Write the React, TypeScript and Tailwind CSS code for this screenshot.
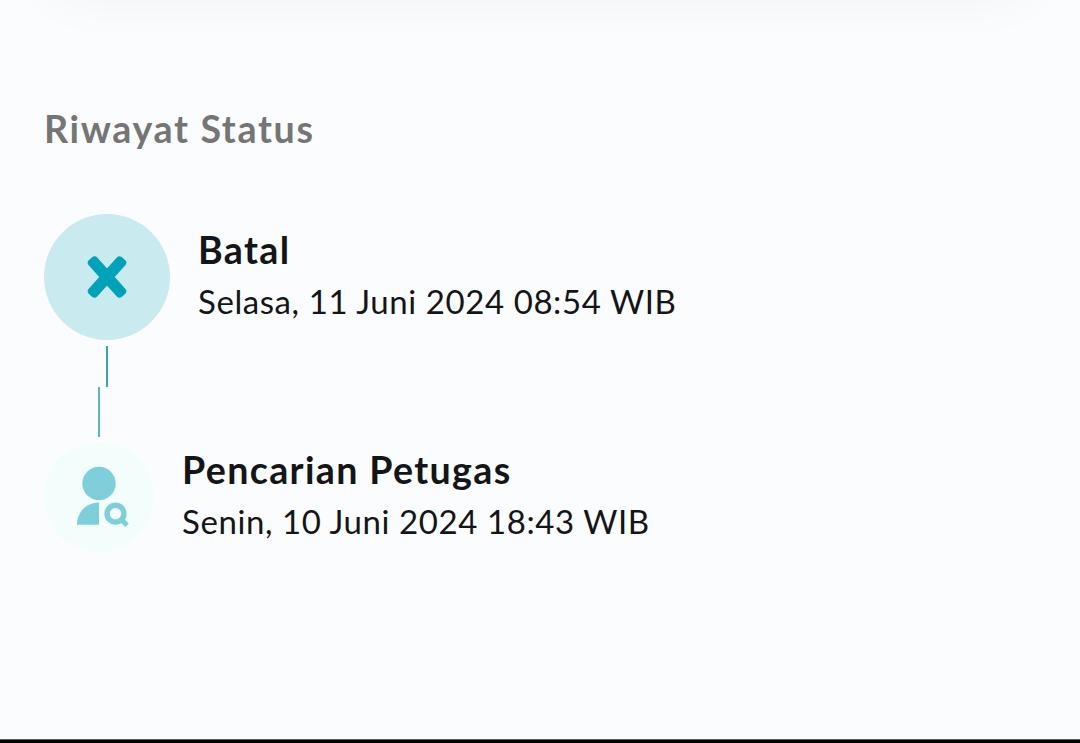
import React from 'react';

interface StatusItem {
  id: number;
  title: string;
  date: string;
  active: boolean;
}

const HISTORY: StatusItem[] = [
  {
    id: 1,
    title: 'Batal',
    date: 'Selasa, 11 Juni 2024 08:54 WIB',
    active: true
  },
  {
    id: 2,
    title: 'Pencarian Petugas',
    date: 'Senin, 10 Juni 2024 18:43 WIB',
    active: false
  }
];

const CancelIcon = () => (
  <svg width="40" height="44" viewBox="0 0 40 44" fill="#00a2b9">
    <rect x="-5.7" y="-24.6" width="11.4" height="49.2" rx="3.6" transform="translate(20 22) rotate(42)" />
    <rect x="-5.7" y="-24.6" width="11.4" height="49.2" rx="3.6" transform="translate(20 22) rotate(-42)" />
  </svg>
);

const SearchUserIcon = () => (
  <svg width="54" height="62" viewBox="0 0 54 62" fill="#7ecfda">
    <circle cx="22" cy="17.5" r="16.7" />
    <path d="M22 36.5V58.7H0C0 46 9.5 36.5 22 36.5Z" />
    <circle cx="38.5" cy="47.7" r="8.4" fill="none" stroke="#7ecfda" strokeWidth="5.4" />
    <path d="M44 53.2L50 59.2" stroke="#7ecfda" strokeWidth="5" />
  </svg>
);

const App = () => {
  return (
    <div className="flex h-[743px] w-[1080px] flex-col overflow-hidden bg-[#fbfcfe] font-['Lato','Open_Sans',sans-serif] text-[#141517]">
      {/* Bottom edge of the card above */}
      <div className="mx-11 -mt-20 h-[70px] shrink-0 rounded-[40px] shadow-[0_8px_56px_rgba(0,0,0,0.04)]" />

      <div className="flex-1 px-11 pt-[117px]">
        <h2 className="w-max text-[37.6px] leading-[44px] font-bold tracking-[1.65px] text-[#757575]">
          Riwayat Status
        </h2>

        <div className="mt-[63px]">
          {HISTORY.map((item) => (
            <div key={item.id} className="flex gap-7">
              {item.active ? (
                <div className="flex flex-col items-center">
                  <div className="flex size-[126px] items-center justify-center rounded-full bg-[#c9eaee]">
                    <CancelIcon />
                  </div>
                  <div className="mt-[6px] h-[41px] w-[2px] bg-[#38a5b0]" />
                </div>
              ) : (
                <div className="flex flex-col items-center">
                  <div className="mb-[5px] h-[50px] w-[2px] bg-[#5bb8c1]" />
                  <div className="flex size-[110px] items-center justify-center rounded-full bg-[#f3fdfc] pl-[10px]">
                    <SearchUserIcon />
                  </div>
                </div>
              )}
              <div className={item.active ? 'pt-[14px]' : 'pt-[61px]'}>
                <p className="w-max text-[37.6px] leading-[44px] font-bold tracking-[1.35px]">{item.title}</p>
                <p className="mt-[7px] w-max text-[33px] leading-[44px] tracking-[0.58px]">{item.date}</p>
              </div>
            </div>
          ))}
        </div>
      </div>

      <div className="h-1 shrink-0 border-t border-[#5c5d5e] bg-black" />
    </div>
  );
};

export default App;
